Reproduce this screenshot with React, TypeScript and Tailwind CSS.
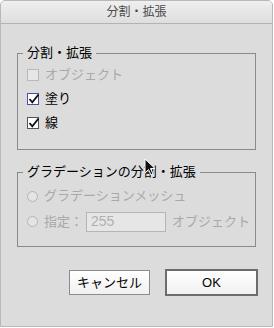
import type { ReactNode } from "react";

const font = "font-[family-name:'Liberation_Sans','Noto_Sans_CJK_JP',sans-serif]";

function CheckBox({ checked, disabled, focused }: { checked?: boolean; disabled?: boolean; focused?: boolean }) {
  const border = disabled ? "border-[#b9b9b9] bg-[#e6e6e6]" : focused ? "border-[#4b4bb0] bg-white" : "border-[#555] bg-white";
  return (
    <span className={`relative flex h-[12px] w-[12px] shrink-0 items-center justify-center border ${border}`}>
      {checked ? (
        <svg viewBox="0 0 12 12" className="absolute -top-[1px] left-0 h-[12px] w-[12px]">
          <path d="M1.5 6 L4.3 9.3 L10.5 1.5" fill="none" stroke="#111" strokeWidth="1.8" />
        </svg>
      ) : null}
    </span>
  );
}

function Radio() {
  return <span className="block h-[11px] w-[11px] shrink-0 rounded-full border border-[#b5b5b5] bg-[#e4e4e4]" />;
}

function Row({ icon, children, className = "" }: { icon: ReactNode; children: ReactNode; className?: string }) {
  return (
    <div className={`flex items-center whitespace-nowrap pl-[4px] ${className}`}>
      {icon}
      <span className="ml-[6px] flex items-center">{children}</span>
    </div>
  );
}

export default function App() {
  return (
    <div className={`h-[328px] w-[274px] bg-white ${font}`}>
      <div className="relative flex h-[327px] w-[273px] flex-col overflow-hidden rounded-t-[5px] border border-[#b8b8b8] bg-[#dcdcdc]">
        <div className="flex h-[23px] items-center justify-center border-b border-[#b3b3b3] bg-gradient-to-b from-[#efefef] to-[#dedede] text-[12px] text-[#4a4a4a]">
          分割・拡張
        </div>

        <fieldset className="mx-[16px] mt-[20px] border border-[#8a8a8a] px-[5px] pb-[14px] pt-[1px] text-[13px]">
          <legend className="px-[4px] leading-[18px] text-black">分割・拡張</legend>
          <Row icon={<CheckBox disabled />} className="h-[24px] text-[#a9a9a9]">
            オブジェクト
          </Row>
          <Row icon={<CheckBox checked focused />} className="h-[24px] text-black">
            塗り
          </Row>
          <Row icon={<CheckBox checked />} className="h-[24px] text-black">
            線
          </Row>
        </fieldset>

        <fieldset className="mx-[16px] mt-[13px] border border-[#8a8a8a] px-[5px] pb-[11px] pt-[3px] text-[13px]">
          <legend className="px-[4px] leading-[18px] text-black">グラデーションの分割・拡張</legend>
          <Row icon={<Radio />} className="h-[24px] text-[#a9a9a9]">
            グラデーションメッシュ
          </Row>
          <Row icon={<Radio />} className="h-[27px] text-[#a9a9a9]">
            <span className="w-[42px]">指定：</span>
            <span className="flex h-[20px] w-[80px] items-center border border-[#b5b5b5] bg-[#e6e6e6] pl-[4px] text-[14px] text-[#b0b0b0]">
              255
            </span>
            <span className="ml-[6px]">オブジェクト</span>
          </Row>
        </fieldset>

        <div className="mr-[14px] mt-[22px] flex items-center justify-end gap-[15px] text-[13px] text-black">
          <button className="flex h-[25px] w-[81px] items-center justify-center border border-[#8c8c8c] bg-gradient-to-b from-white to-[#f1f1f1]">
            キャンセル
          </button>
          <button className="flex h-[27px] w-[93px] items-center justify-center border-2 border-[#6c6c6c] bg-gradient-to-b from-white to-[#f1f1f1]">
            OK
          </button>
        </div>

        <svg viewBox="0 0 12 19" className="absolute left-[143px] top-[157px] h-[19px] w-[12px]">
          <path d="M1 1 L1 15 L4.5 11.5 L7 17 L9 16 L6.5 10.5 L11 10.5 Z" fill="#111" stroke="#fff" strokeWidth="1" />
        </svg>
      </div>
    </div>
  );
}
